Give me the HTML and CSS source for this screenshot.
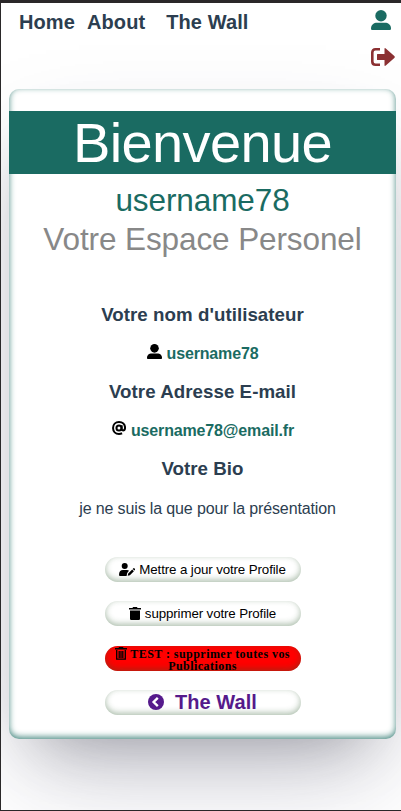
FILE: index.html
```html
<!DOCTYPE html>
<html lang="fr">
<head>
<meta charset="utf-8">
<title>Profil</title>
<link rel="stylesheet" href="styles.css">
</head>
<body>
<header class="topbar">
  <nav class="links"><a class="home">Home</a><a class="about">About</a><a>The Wall</a></nav>
  <div class="actions">
    <svg class="i-user" viewBox="0 0 20 20"><circle cx="10" cy="5.800" r="5.700"/><path d="M0 18.500C0 14.500 3 12.700 6 12.700h8c3 0 6 1.800 6 5.800 0 1-.6 1.500-1.500 1.500h-17C.6 20 0 19.500 0 18.500z"/></svg>
    <svg class="i-out" viewBox="0 0 24 18"><path class="line" d="M9 1.300H4.500Q1.300 1.300 1.300 4.500v9q0 3.200 3.200 3.200H9" stroke-width="2.600"/><path d="M6.500 6h7V1q0-1.500 1.300-.5l8.500 7.500q1 1 0 2l-8.500 7.500q-1.300 1-1.300-.5v-5h-7q-.5 0-.5-.5v-5q0-.5.500-.5z"/></svg>
  </div>
</header>
<main class="card">
  <h1>Bienvenue</h1>
  <p class="name">username78</p>
  <p class="space">Votre Espace Personel</p>
  <section class="infos">
    <h3>Votre nom d'utilisateur</h3>
    <p class="value user"><svg class="i-small" viewBox="0 0 20 20"><circle cx="10" cy="5.800" r="5.700"/><path d="M0 18.500C0 14.500 3 12.700 6 12.700h8c3 0 6 1.800 6 5.800 0 1-.6 1.500-1.500 1.500h-17C.6 20 0 19.500 0 18.500z"/></svg><span>username78</span></p>
    <h3>Votre Adresse E-mail</h3>
    <p class="value"><svg class="i-at" viewBox="0 0 16 16"><circle class="line" cx="8" cy="8" r="2.900" stroke-width="2.300"/><path class="line" d="M11 4.800v4.400q0 1.700 1.600 1.700 2.300 0 2.300-3.200C14.900 3.600 12 1.200 8 1.200S1.200 4 1.200 8s2.800 6.800 6.800 6.800q2 0 3.500-.8" stroke-width="2.300"/></svg><span>username78@email.fr</span></p>
    <h3>Votre Bio</h3>
    <p class="bio">je ne suis la que pour la présentation</p>
  </section>
  <div class="buttons">
    <a class="btn"><svg class="i-edit" viewBox="0 0 16 13"><circle cx="5.700" cy="3" r="3"/><path d="M0 12q0-5 4-5h4q1.300 0 2 .7L8.200 10 7.600 13H1q-1 0-1-1zM8.700 12.700l.5-2.200 4-4 1.700 1.700-4 4zM13.700 6l.7-.7q.5-.4 1 0l.5.600q.4.500 0 1l-.6.700z"/></svg><span>Mettre a jour votre Profile</span></a>
    <a class="btn"><svg class="i-trash" viewBox="0 0 12 13"><path d="M0 1h3.500l.5-1h4l.5 1H12v1.600H0zM1 3.500h10v8.300q0 1.200-1.200 1.200H2.200Q1 13 1 11.800z"/></svg><span>supprimer votre Profile</span></a>
    <a class="btn danger"><svg class="i-trash" viewBox="0 0 12 13"><path d="M0 1h3.500l.5-1h4l.5 1H12v1.600H0z"/><path class="line" d="M1.700 3v9.200h8.600V3M4.200 4v7M6 4v7M7.800 4v7" stroke-width="1.300"/></svg> TEST : supprimer toutes vos Publications</a>
    <a class="btn wall"><svg class="i-back" viewBox="0 0 16 16"><circle cx="8" cy="8" r="8"/><path class="chevron" d="M9.800 3.800 5.600 8l4.200 4.200"/></svg><span>The Wall</span></a>
  </div>
</main>
</body>
</html>
```
FILE: styles.css
```css
* { box-sizing: border-box; }
html { background: #fff; }
body {
  margin: 0;
  height: 811px;
  overflow: hidden;
  border: solid #2a2829;
  border-width: 3px 0 1px 1px;
  font-family: "Liberation Sans", Arial, sans-serif;
  color: #2c3e50;
  background: #fff;
}
h1, h3, p { margin: 0; }
svg { display: block; fill: currentColor; }
.line { fill: none; stroke: currentColor; }
.chevron { fill: none; stroke: #fff; stroke-width: 2.400px; }
.topbar {
  height: 86px;
  padding: 7px 6px 0 18px;
  display: flex;
  justify-content: space-between;
}
.links { display: flex; font-size: 20px; font-weight: bold; line-height: 24px; letter-spacing: .1px; }
.home { margin-right: 12px; }
.about { margin-right: 21px; }
.actions { display: flex; flex-direction: column; gap: 18px; color: #1a6b62; }
.i-user { width: 20px; height: 20px; }
.i-out { width: 24px; height: 18px; color: #8b3032; }
.card {
  width: 387px;
  height: 650px;
  margin-left: 8px;
  padding-top: 22px;
  border-radius: 10px;
  text-align: center;
  box-shadow: rgba(50, 50, 93, .25) 0 50px 100px -20px, rgba(0, 0, 0, .3) 0 30px 60px -30px, rgba(26, 107, 98, .8) 0 -2px 6px 0 inset;
}
h1 { height: 63px; line-height: 63px; font-size: 56px; font-weight: normal; letter-spacing: -.65px; color: #fff; background: #1a6b62; }
.name, .space { font-size: 31.500px; line-height: 39px; letter-spacing: -.1px; }
.name { margin-top: 7px; color: #1a6b62; }
.space { color: #888; }
.infos { padding-top: 45px; }
h3 { font-size: 18.720px; line-height: 22px; letter-spacing: .05px; }
.value { display: flex; justify-content: center; gap: 5px; height: 55px; padding-top: 18px; font-weight: bold; font-size: 16px; line-height: 20px; letter-spacing: -.15px; color: #1a6b62; }
.value svg { color: #000; }
.i-small { width: 15px; height: 15px; }
.i-at { width: 14px; height: 14px; margin-left: 1px; }
.bio { margin-top: 19px; padding-left: 10px; font-size: 16px; line-height: 20px; letter-spacing: -.13px; }
.buttons { display: flex; flex-direction: column; align-items: center; gap: 19.300px; margin-top: 38px; }
.btn {
  display: flex;
  align-items: center;
  justify-content: center;
  gap: 4px;
  width: 196px;
  height: 25px;
  border-radius: 13px;
  color: #000;
  font-size: 13.333px;
  letter-spacing: -.12px;
  box-shadow: rgba(44, 91, 44, .4) 0 -2px 6px 0 inset;
}
.i-edit { width: 16px; height: 13px; }
.i-trash { width: 12px; height: 13px; }
.danger { display: block; background: red; font: bold 12px/12px "Liberation Serif", serif; letter-spacing: .45px; padding-top: 1px; }
.danger svg { display: inline-block; vertical-align: -2px; }
.wall { gap: 11px; color: #551a8b; font-size: 20px; font-weight: bold; letter-spacing: .05px; }
.i-back { width: 16px; height: 16px; }
```
